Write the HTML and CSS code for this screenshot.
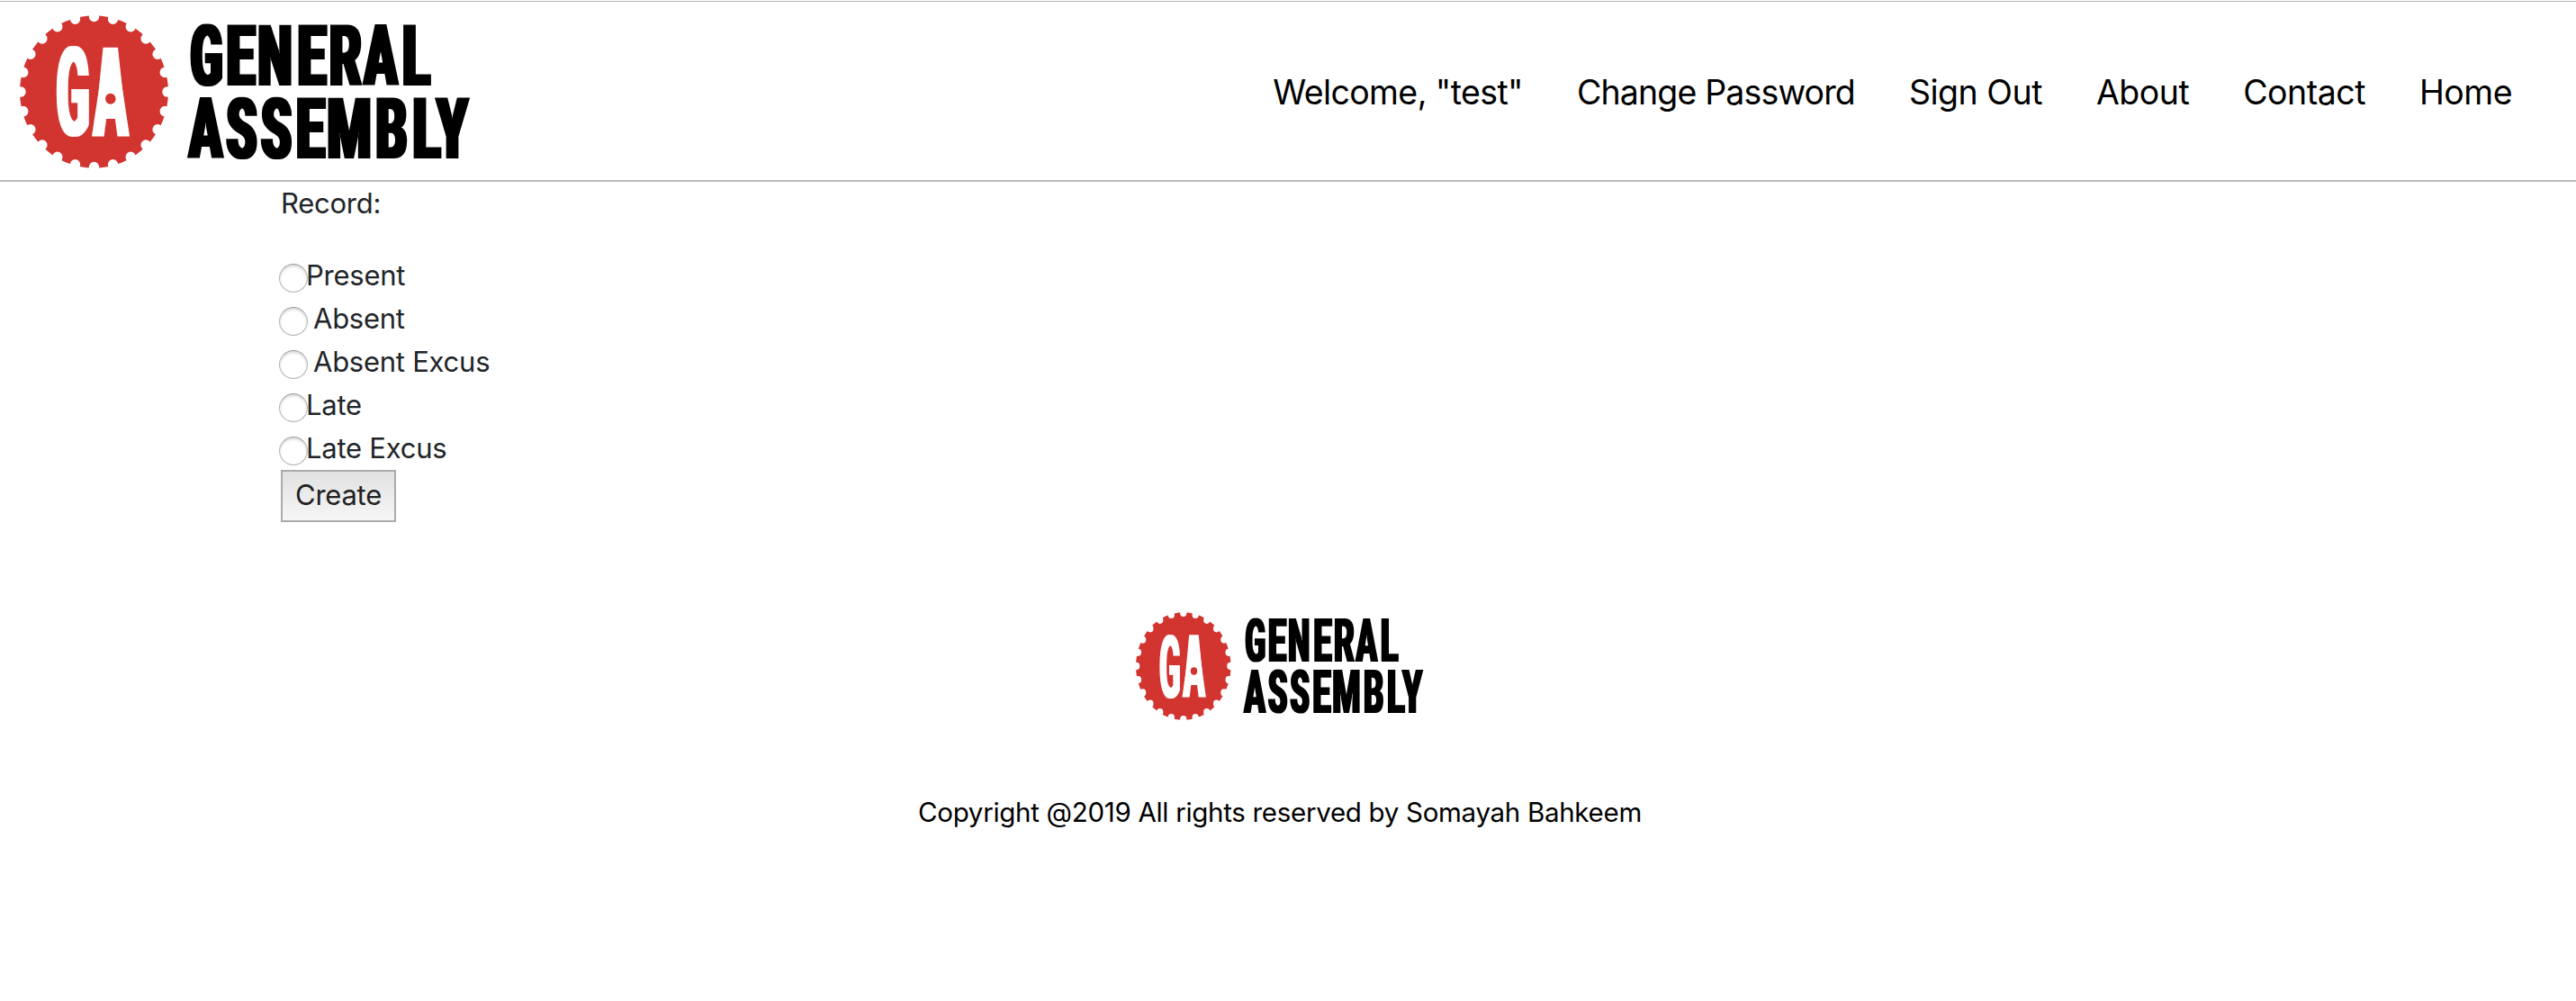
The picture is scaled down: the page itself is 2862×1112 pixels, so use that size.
FILE: index.html
```html
<!DOCTYPE html>
<html lang="en">
<head>
<meta charset="utf-8">
<title>Record attendance</title>
<link rel="stylesheet" href="styles.css">
</head>
<body>
<header class="header">
  <svg class="header-logo" viewBox="22 17 502 170" preserveAspectRatio="none" role="img" aria-label="General Assembly">
    <defs>
      <filter id="widen" x="-5%" y="-5%" width="110%" height="110%"><feMorphology operator="dilate" radius="2 0.1"/></filter>
      <g id="ga-logo">
        <g transform="translate(104.5 102) scale(1 1.026)">
          <circle r="82.5" fill="#d23430"/>
          <circle class="notches" r="81.5" pathLength="24"/>
        </g>
        <g class="monogram" filter="url(#widen)">
          <text y="151"><tspan x="62.500" textLength="37" lengthAdjust="spacingAndGlyphs">G</tspan><tspan x="104" textLength="38" lengthAdjust="spacingAndGlyphs">A</tspan></text>
        </g>
        <path d="M114.5 52.7h16.5l8 74h-32z" fill="#fff"/>
        <ellipse cx="122.8" cy="109.7" rx="5.8" ry="6" fill="#d23430"/>
        <g class="wordmark" filter="url(#widen)">
          <text y="95"><tspan x="211.5" textLength="36" lengthAdjust="spacingAndGlyphs">G</tspan><tspan x="251.5" textLength="32" lengthAdjust="spacingAndGlyphs">E</tspan><tspan x="286.5" textLength="38" lengthAdjust="spacingAndGlyphs">N</tspan><tspan x="330.5" textLength="32" lengthAdjust="spacingAndGlyphs">E</tspan><tspan x="366" textLength="36" lengthAdjust="spacingAndGlyphs">R</tspan><tspan x="404.5" textLength="37" lengthAdjust="spacingAndGlyphs">A</tspan><tspan x="447" textLength="31" lengthAdjust="spacingAndGlyphs">L</tspan></text>
          <text y="175.7"><tspan x="210" textLength="37" lengthAdjust="spacingAndGlyphs">A</tspan><tspan x="251.5" textLength="34" lengthAdjust="spacingAndGlyphs">S</tspan><tspan x="290" textLength="34" lengthAdjust="spacingAndGlyphs">S</tspan><tspan x="329" textLength="32" lengthAdjust="spacingAndGlyphs">E</tspan><tspan x="363.5" textLength="49" lengthAdjust="spacingAndGlyphs">M</tspan><tspan x="417.5" textLength="35" lengthAdjust="spacingAndGlyphs">B</tspan><tspan x="458.5" textLength="31" lengthAdjust="spacingAndGlyphs">L</tspan><tspan x="485" textLength="35" lengthAdjust="spacingAndGlyphs">Y</tspan></text>
        </g>
      </g>
    </defs>
    <use href="#ga-logo"/>
  </svg>
  <nav class="nav">
    <a class="welcome">Welcome, "test"</a>
    <a class="change-password">Change Password</a>
    <a>Sign Out</a>
    <a>About</a>
    <a>Contact</a>
    <a>Home</a>
  </nav>
</header>
<main class="record">
  <p class="record-title">Record:</p>
  <label class="option"><input type="radio" name="status">Present</label>
  <label class="option option-spaced"><input type="radio" name="status">Absent</label>
  <label class="option option-spaced"><input type="radio" name="status">Absent Excus</label>
  <label class="option"><input type="radio" name="status">Late</label>
  <label class="option"><input type="radio" name="status">Late Excus</label>
  <button class="create">Create</button>
</main>
<footer class="footer">
  <svg class="footer-logo" viewBox="22 17 502 170" preserveAspectRatio="none" role="img" aria-label="General Assembly"><use href="#ga-logo"/></svg>
  <p class="copyright">Copyright @2019 All rights reserved by Somayah Bahkeem</p>
</footer>
</body>
</html>
```
FILE: styles.css
```css
* { box-sizing: border-box; }
body {
  margin: 0;
  padding-top: 1px;
  background: #fff;
  color: #212529;
  font: 31px/48px Inter, "Liberation Sans", sans-serif;
  letter-spacing: -0.25px;
}
p { margin: 0; }
.header {
  display: flex;
  align-items: flex-start;
  justify-content: space-between;
  height: 201px;
  padding: 15px 71px 0 22px;
  border-top: 1px solid #b5b5b5;
  border-bottom: 2px solid #bababa;
}
.header-logo { width: 502px; height: 170px; overflow: visible; }
.notches {
  fill: none;
  stroke: #fff;
  stroke-width: 11.4;
  stroke-linecap: round;
  stroke-dasharray: 0 1;
}
.monogram { fill: #fff; font: 800 137px Roboto, sans-serif; letter-spacing: 0; }
.wordmark { fill: #000; font: 900 95px Roboto, sans-serif; letter-spacing: 0; }
.nav {
  display: flex;
  gap: 60px;
  padding-top: 62px;
  color: #000;
  font-size: 37.5px;
  line-height: 48px;
  letter-spacing: -0.5px;
  white-space: nowrap;
}
.welcome { letter-spacing: -0.6px; }
.change-password { letter-spacing: -0.85px; }
.record {
  display: flex;
  flex-direction: column;
  align-items: flex-start;
  padding: 0 0 0 312px;
}
.record-title { margin-bottom: 32px; }
.option { display: flex; align-items: center; height: 48px; }
.option input {
  appearance: none;
  width: 32px;
  height: 32px;
  margin: 5px -2px 0 -2px;
  border: 1px solid #b4b4b4;
  border-top-color: #999;
  border-radius: 50%;
  background: #fff;
  box-shadow: inset 0 2px 3px rgba(0, 0, 0, .16);
}
.option-spaced input { margin-right: 6px; }
.create {
  width: 128px;
  height: 58px;
  padding: 0 0 2px;
  border: 2px solid #ababab;
  background: linear-gradient(#e1e1e1, #f6f6f6);
  color: #212121;
  font: inherit;
  letter-spacing: inherit;
}
.footer {
  display: flex;
  flex-direction: column;
  align-items: center;
  padding: 100px 18px 0 0;
  color: #000;
}
.footer-logo { width: 321px; height: 120px; overflow: visible; }
.copyright {
  margin-top: 78px;
  font-size: 29.5px;
  letter-spacing: -0.3px;
  white-space: nowrap;
}
```
